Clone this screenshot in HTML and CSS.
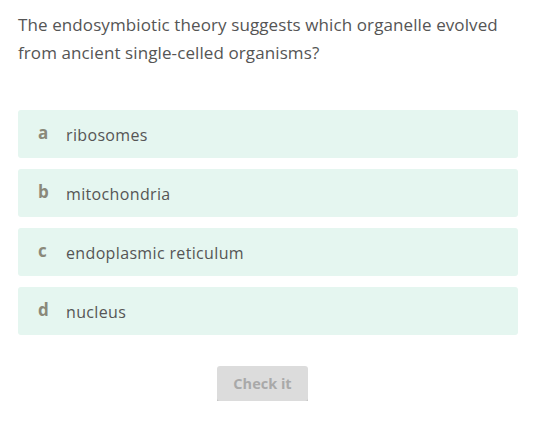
FILE: index.html
```html
<!DOCTYPE html>
<html>
<head>
<meta charset="utf-8">
<link rel="stylesheet" href="styles.css">
</head>
<body>
<div class="quiz">
  <p class="question">The endosymbiotic theory suggests which organelle evolved from ancient single-celled organisms?</p>
  <div class="options">
    <div class="option"><span class="letter">a</span><span class="label">ribosomes</span></div>
    <div class="option"><span class="letter">b</span><span class="label">mitochondria</span></div>
    <div class="option"><span class="letter">c</span><span class="label">endoplasmic reticulum</span></div>
    <div class="option"><span class="letter">d</span><span class="label">nucleus</span></div>
  </div>
  <div class="actions"><button class="check">Check it</button></div>
</div>
</body>
</html>
```
FILE: styles.css
```css
html, body { margin: 0; padding: 0; background: #fff; }
body { font-family: "Open Sans", sans-serif; color: #555; }
.quiz { padding: 11px 21px 0 18px; }
.question { margin: 0; font-size: 17px; line-height: 28px; letter-spacing: 0.1px; color: #555; }
.options { margin-top: 43px; display: flex; flex-direction: column; gap: 11px; }
.option { height: 48px; background: #e5f6f0; border-radius: 3px; display: flex; align-items: center; }
.letter { width: 48px; padding-left: 20px; box-sizing: border-box; font-weight: 700; font-size: 17px; color: #8a897a; margin-top: -4px; }
.label { font-size: 16px; letter-spacing: 0.35px; color: #555; margin-top: 2px; }
.actions { display: flex; padding-left: 199px; margin-top: 31px; }
.check { width: 91px; height: 35px; border: 0; border-radius: 3px; background: #dcdcdc; box-shadow: 0 2px 0 #c6c6c6; font-family: inherit; font-weight: 700; font-size: 14.5px; color: #a9a9a9; padding: 0; }
```
